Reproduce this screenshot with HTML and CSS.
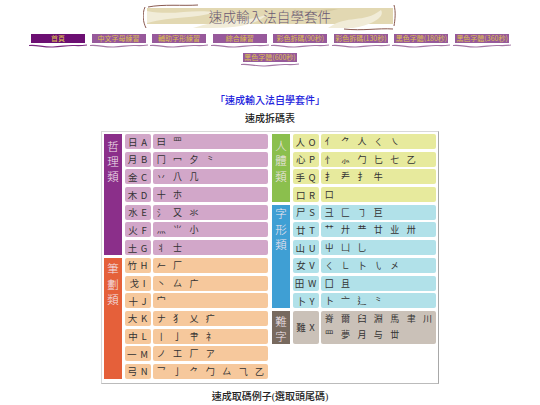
FILE: index.html
```html
<!DOCTYPE html>
<html lang="zh-Hant">
<head>
    <meta charset="UTF-8">
    <meta name="viewport" content="width=device-width, initial-scale=1.0">
    <title>速成輸入法自學套件</title>
    <link rel="stylesheet" href="styles.css">
</head>
<body>
    <svg class="defs" width="0" height="0">
        <symbol id="wave" viewBox="0 0 58 4" preserveAspectRatio="none">
            <path d="M0 1.5 C8 0.5 14 3.5 24 3 C34 2.5 38 1 46 1.5 C50 1.8 54 1.5 58 1" fill="none" stroke="currentColor" stroke-width="1.1"/>
        </symbol>
    </svg>

    <!-- Banner -->
    <div class="banner">
        <svg class="banner-art" viewBox="0 0 254 28" width="254" height="28">
            <path d="M4 7 C30 12 45 5 72 8 C52 15 30 12 4 19Z" fill="#f1ecd8"/>
            <path d="M50 24 C85 13 100 20 125 10 C112 22 90 24 70 24Z" fill="#f1ecd8"/>
            <path d="M150 5 C165 10 180 4 195 5 C182 9 165 12 150 5Z" fill="#d6cba2"/>
            <path d="M185 24 C205 10 220 20 238 6 C243 14 225 22 210 24Z" fill="#f1ecd8"/>
            <path d="M5 3 C20 0 40 2 55 1" fill="none" stroke="#8a5a50" stroke-width="1"/>
            <path d="M2 3 C-1 10 0 18 3 24" fill="none" stroke="#8a5a50" stroke-width="1"/>
            <path d="M251 1 C253 8 252 16 251 22" fill="none" stroke="#8a5a50" stroke-width="1"/>
            <path d="M201 25 C220 27 235 24 250 25" fill="none" stroke="#8a5a50" stroke-width="1"/>
        </svg>
        <span class="banner-title">速成輸入法自學套件</span>
    </div>

    <!-- Navigation -->
    <div class="nav">
        <div class="nav-item active"><div class="nav-btn">首頁</div><svg class="nav-wave"><use href="#wave"/></svg></div>
        <div class="nav-item"><div class="nav-btn">中文字母練習</div><svg class="nav-wave"><use href="#wave"/></svg></div>
        <div class="nav-item"><div class="nav-btn">輔助字形練習</div><svg class="nav-wave"><use href="#wave"/></svg></div>
        <div class="nav-item"><div class="nav-btn">綜合練習</div><svg class="nav-wave"><use href="#wave"/></svg></div>
        <div class="nav-item"><div class="nav-btn">彩色拆碼(90秒)</div><svg class="nav-wave"><use href="#wave"/></svg></div>
        <div class="nav-item"><div class="nav-btn">彩色拆碼(130秒)</div><svg class="nav-wave"><use href="#wave"/></svg></div>
        <div class="nav-item"><div class="nav-btn">黑色字體(180秒)</div><svg class="nav-wave"><use href="#wave"/></svg></div>
        <div class="nav-item"><div class="nav-btn">黑色字體(360秒)</div><svg class="nav-wave"><use href="#wave"/></svg></div>
        <div class="nav-item"><div class="nav-btn">黑色字體(600秒)</div><svg class="nav-wave"><use href="#wave"/></svg></div>
    </div>

    <h2 class="heading">「速成輸入法自學套件」</h2>
    <h3 class="subheading">速成拆碼表</h3>

    <!-- Chart -->
    <div class="chart">
        <div class="panel">
            <div class="group phil">
                <div class="cat span-7">哲<br>理<br>類</div>
                <div class="key">日 A</div><div class="strokes"><span>曰</span><span>罒</span></div>
                <div class="key">月 B</div><div class="strokes"><span>冂</span><span>冖</span><span>夕</span><span>⺀</span></div>
                <div class="key">金 C</div><div class="strokes"><span>丷</span><span>八</span><span>几</span></div>
                <div class="key">木 D</div><div class="strokes"><span>十</span><span>朩</span></div>
                <div class="key">水 E</div><div class="strokes"><span>氵</span><span>又</span><span>氺</span></div>
                <div class="key">火 F</div><div class="strokes"><span>灬</span><span>⺌</span><span>小</span></div>
                <div class="key">土 G</div><div class="strokes"><span>丬</span><span>士</span></div>
            </div>
            <div class="group brush">
                <div class="cat span-7">筆<br>劃<br>類</div>
                <div class="key">竹 H</div><div class="strokes"><span>𠂉</span><span>厂</span></div>
                <div class="key">戈 I</div><div class="strokes"><span>丶</span><span>厶</span><span>广</span></div>
                <div class="key">十 J</div><div class="strokes"><span>宀</span></div>
                <div class="key">大 K</div><div class="strokes"><span>ナ</span><span>犭</span><span>乂</span><span>疒</span></div>
                <div class="key">中 L</div><div class="strokes"><span>丨</span><span>亅</span><span>肀</span><span>礻</span></div>
                <div class="key">一 M</div><div class="strokes"><span>ノ</span><span>工</span><span>厂</span><span>ア</span></div>
                <div class="key">弓 N</div><div class="strokes"><span>乛</span><span>亅</span><span>⺈</span><span>勹</span><span>厶</span><span>⺄</span><span>乙</span></div>
            </div>
        </div>
        <div class="panel">
            <div class="group body-part">
                <div class="cat span-4">人<br>體<br>類</div>
                <div class="key">人 O</div><div class="strokes"><span>亻</span><span>⺈</span><span>人</span><span>ㄑ</span><span>㇏</span></div>
                <div class="key">心 P</div><div class="strokes"><span>忄</span><span>⺗</span><span>勹</span><span>匕</span><span>七</span><span>⼄</span></div>
                <div class="key">手 Q</div><div class="strokes"><span>扌</span><span>龵</span><span>⺘</span><span>牛</span></div>
                <div class="key">口 R</div><div class="strokes"><span>口</span></div>
            </div>
            <div class="group shape">
                <div class="cat span-6">字<br>形<br>類</div>
                <div class="key">尸 S</div><div class="strokes"><span>彐</span><span>匚</span><span>㇆</span><span>巨</span></div>
                <div class="key">廿 T</div><div class="strokes"><span>艹</span><span>廾</span><span>龷</span><span>廿</span><span>业</span><span>卅</span></div>
                <div class="key">山 U</div><div class="strokes"><span>屮</span><span>凵</span><span>乚</span></div>
                <div class="key">女 V</div><div class="strokes"><span>ㄑ</span><span>㇗</span><span>卜</span><span>㇂</span><span>㐅</span></div>
                <div class="key">田 W</div><div class="strokes"><span>囗</span><span>且</span></div>
                <div class="key">卜 Y</div><div class="strokes"><span>卜</span><span>亠</span><span>辶</span><span>⺀</span></div>
            </div>
            <div class="group rare">
                <div class="cat span-2">難<br>字</div>
                <div class="key span-2">難 X</div>
                <div class="strokes span-2"><span>脊</span><span>爾</span><span>臼</span><span>淵</span><span>馬</span><span>聿</span><span>川</span><span>罒</span><span>夢</span><span>月</span><span>与</span><span>丗</span></div>
            </div>
        </div>
    </div>

    <h3 class="caption">速成取碼例子(選取頭尾碼)</h3>
</body>
</html>
```

FILE: styles.css
```css
body {
    margin: 0;
    background: #fff;
    font-family: "Liberation Serif", "Noto Sans CJK TC", serif;
    color: #222;
}

.defs {
    display: block;
}

.banner {
    position: relative;
    width: 246px;
    height: 16px;
    margin: 8px auto 0;
    background: #e2d8b2;
    text-align: center;
}

.banner-art {
    position: absolute;
    left: -4px;
    top: -4px;
}

.banner-title {
    position: relative;
    font-family: "Noto Sans CJK TC", sans-serif;
    font-size: 13.6px;
    line-height: 16px;
    font-weight: 300;
    color: #6a5a74;
}

.nav {
    display: flex;
    flex-wrap: wrap;
    justify-content: center;
    width: 485px;
    margin: 10px auto 0;
}

.nav-item {
    width: 60.6px;
    height: 19px;
    color: #a478a6;
}

.nav-item.active {
    color: #7a2a80;
}

.nav-btn {
    width: 54px;
    height: 9px;
    margin: 0 auto;
    background: #97599b;
    color: #dcc050;
    font-family: "Noto Sans CJK TC", sans-serif;
    font-size: 7px;
    line-height: 9px;
    text-align: center;
    white-space: nowrap;
    overflow: hidden;
}

.nav-item.active .nav-btn {
    background: #6c0f72;
}

.nav-wave {
    display: block;
    width: 58px;
    height: 4px;
    margin: 1px auto 0;
}

.heading, .subheading, .caption {
    margin: 0;
    font-size: 10px;
    line-height: 13px;
    text-align: center;
    font-weight: 500;
}

.heading {
    margin-top: 22px;
    color: #2222dd;
}

.subheading {
    margin-top: 5px;
}

.chart {
    display: flex;
    gap: 4px;
    width: 332px;
    height: 246px;
    margin: 6px auto 0;
    padding: 2px 2px 3px;
    border: 1px solid #d8d8d8;
    border-right-color: #a8a8a8;
    border-bottom-color: #bbb;
    font-family: "Noto Sans CJK TC", sans-serif;
}

.panel {
    display: grid;
    grid-template-columns: 18px 26px 115px;
    grid-auto-rows: 15px;
    column-gap: 2.5px;
    row-gap: 2.7px;
}

.group {
    display: contents;
}

.cat {
    color: #f3e6ee;
    font-size: 11.5px;
    font-weight: 300;
    line-height: 15.3px;
    text-align: center;
}

.key {
    display: flex;
    align-items: center;
    justify-content: center;
    border-radius: 2px;
    font-size: 9.5px;
    word-spacing: 1.5px;
    color: #333;
    white-space: pre;
}

.strokes {
    display: flex;
    flex-wrap: wrap;
    align-items: center;
    align-content: center;
    border-radius: 2px;
    font-size: 9px;
    line-height: 15px;
    color: #333;
}

.strokes span {
    width: 16.4px;
    text-align: center;
}

.strokes.span-2 {
    line-height: 16.5px;
}

.span-2 { grid-row: span 2; }
.span-4 { grid-row: span 4; }
.span-6 { grid-row: span 6; }
.span-7 { grid-row: span 7; }

.phil .cat { background: #8b2f8a; padding-top: 4.5px; }
.phil .key, .phil .strokes { background: #d2a7c9; }

.brush .cat { background: #e5603a; padding-top: 3.5px; }
.brush .key, .brush .strokes { background: #f6c89c; }

.body-part .cat { background: #8bbf4d; padding-top: 4px; }
.body-part .key, .body-part .strokes { background: #e7ea9d; }

.shape .cat { background: #3f9fd4; padding-top: 1.5px; }
.shape .key, .shape .strokes { background: #b1e1e9; }

.rare .cat { background: #786a5f; padding-top: 3px; }
.rare .key, .rare .strokes { background: #cac1b8; }

.caption {
    margin-top: 6px;
}
```
